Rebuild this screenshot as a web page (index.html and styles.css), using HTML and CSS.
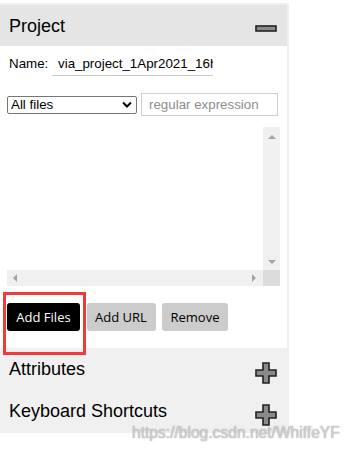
FILE: index.html
```html
<!DOCTYPE html>
<html>
<head>
<meta charset="utf-8">
<link rel="stylesheet" href="styles.css">
</head>
<body>
<div class="panel">
  <div class="sec-head open">
    <span class="sec-title">Project</span>
    <svg class="tog" width="22" height="7" viewBox="0 0 22 7"><rect x="1" y="1" width="20" height="5" fill="#8a8a8a" stroke="#222" stroke-width="1.6"/></svg>
  </div>
  <div class="project-body">
    <div class="name-row">
      <span class="label">Name:</span>
      <span class="name-input">via_project_1Apr2021_16h50m</span>
    </div>
    <div class="filter-row">
      <div class="select"><span>All files</span>
        <svg width="10" height="7" viewBox="0 0 10 7"><path d="M1 1.5 L5 5.5 L9 1.5" fill="none" stroke="#000" stroke-width="2"/></svg>
      </div>
      <div class="regex">regular expression</div>
    </div>
    <div class="filelist">
      <div class="list-area"></div>
      <div class="vscroll">
        <svg width="8" height="5" viewBox="0 0 8 5"><path d="M0 5 L4 1 L8 5Z" fill="#a3a3a3"/></svg>
        <svg width="8" height="5" viewBox="0 0 8 5"><path d="M0 0 L4 4 L8 0Z" fill="#a3a3a3"/></svg>
      </div>
      <div class="hscroll">
        <svg width="5" height="8" viewBox="0 0 5 8"><path d="M5 0 L1 4 L5 8Z" fill="#a3a3a3"/></svg>
        <svg width="5" height="8" viewBox="0 0 5 8"><path d="M0 0 L4 4 L0 8Z" fill="#a3a3a3"/></svg>
      </div>
      <div class="corner"></div>
    </div>
    <div class="buttons">
      <span class="btn dark w-files">Add Files</span>
      <span class="btn w-url">Add URL</span>
      <span class="btn w-remove">Remove</span>
      <div class="highlight"></div>
    </div>
  </div>
  <div class="closed-secs">
    <div class="sec-row">
      <span class="sec-title">Attributes</span>
      <svg class="plus" width="22" height="22" viewBox="0 0 22 22"><path d="M8 1H14V8H21V14H14V21H8V14H1V8H8Z" fill="#8a8a8a" stroke="#222" stroke-width="1.6"/></svg>
    </div>
    <div class="sec-row">
      <span class="sec-title">Keyboard Shortcuts</span>
      <svg class="plus" width="22" height="22" viewBox="0 0 22 22"><path d="M8 1H14V8H21V14H14V21H8V14H1V8H8Z" fill="#8a8a8a" stroke="#222" stroke-width="1.6"/></svg>
    </div>
  </div>
</div>
<div class="watermark">https://blog.csdn.net/WhiffeYF</div>
</body>
</html>
```
FILE: styles.css
```css
html, body {
  margin: 0;
  padding: 0;
  background: #fff;
}
body {
  position: relative;
  width: 351px;
  height: 450px;
  overflow: hidden;
  font-family: "Liberation Sans", Arial, sans-serif;
  color: #000;
}
.panel {
  margin-top: 3px;
  width: 287px;
  border-top: 2px solid #f0f0f0;
  border-right: 2px solid #f0f0f0;
}
.sec-head {
  height: 41px;
  background: #e5e5e5;
  display: flex;
  align-items: center;
  justify-content: space-between;
  padding: 0 10px 0 9px;
}
.sec-title {
  font-size: 18px;
  line-height: 20px;
}
.tog {
  margin-top: 6px;
}
.project-body {
  padding: 7px 7px 17px 7px;
  position: relative;
}
.name-row {
  display: flex;
  align-items: flex-start;
  height: 23px;
}
.label {
  font-size: 13.33px;
  padding: 3px 0 0 2px;
  width: 43px;
}
.name-input {
  width: 150px;
  padding: 3px 5px 0 6px;
  height: 19px;
  border-bottom: 1px solid #c8c8c8;
  font-size: 13.33px;
  white-space: nowrap;
  overflow: hidden;
}
.filter-row {
  margin-top: 17px;
  display: flex;
  align-items: center;
  gap: 4px;
}
.select {
  height: 16px;
  border: 1px solid #767676;
  border-radius: 2px;
  display: flex;
  align-items: center;
  justify-content: space-between;
  padding: 0 4px 0 3px;
  box-sizing: content-box;
  width: 121px;
  font-size: 13.33px;
}
.regex {
  width: 128px;
  height: 21px;
  border: 1px solid #cfcfcf;
  padding: 0 0 0 7px;
  font-size: 13.33px;
  line-height: 21px;
  color: #8e8e8e;
}
.filelist {
  margin-top: 11px;
  width: 273px;
  height: 159px;
  display: grid;
  grid-template-columns: 256px 17px;
  grid-template-rows: 143px 16px;
}
.list-area {
  background: #fff;
}
.vscroll {
  background: #f0f0f0;
  display: flex;
  flex-direction: column;
  justify-content: space-between;
  align-items: center;
  padding: 7px 0 5px;
}
.hscroll {
  background: #f0f0f0;
  display: flex;
  justify-content: space-between;
  align-items: center;
  padding: 0 6px 0 5px;
}
.corner {
  background: #dcdcdc;
}
.buttons {
  margin-top: 17px;
  display: flex;
  gap: 6.5px;
  position: relative;
}
.btn {
  height: 28px;
  box-sizing: border-box;
  border-radius: 3px;
  background: #cccccc;
  font-family: "Open Sans", sans-serif;
  font-size: 13px;
  display: flex;
  align-items: center;
  justify-content: center;
}
.btn.dark {
  background: #000;
  color: #fff;
}
.w-files { width: 73px; }
.w-url { width: 69px; }
.w-remove { width: 66px; }
.highlight {
  position: absolute;
  left: -4px;
  top: -11px;
  width: 77px;
  height: 57px;
  border: 3px solid #ef3b3c;
}
.closed-secs {
  background: #f0f0f0;
  padding-bottom: 1px;
}
.sec-row {
  height: 42px;
  display: flex;
  align-items: center;
  justify-content: space-between;
  padding: 0 10px 0 9px;
}
.plus {
  margin-top: 7px;
}
.watermark {
  position: absolute;
  left: 132px;
  top: 424px;
  font-family: "Liberation Sans", Arial, sans-serif;
  font-size: 15.6px;
  color: rgba(255, 255, 255, 0.55);
  text-shadow: 0 0 1px rgba(120, 120, 120, 0.6), 0 0 1px rgba(120, 120, 120, 0.6);
  white-space: nowrap;
}
```
